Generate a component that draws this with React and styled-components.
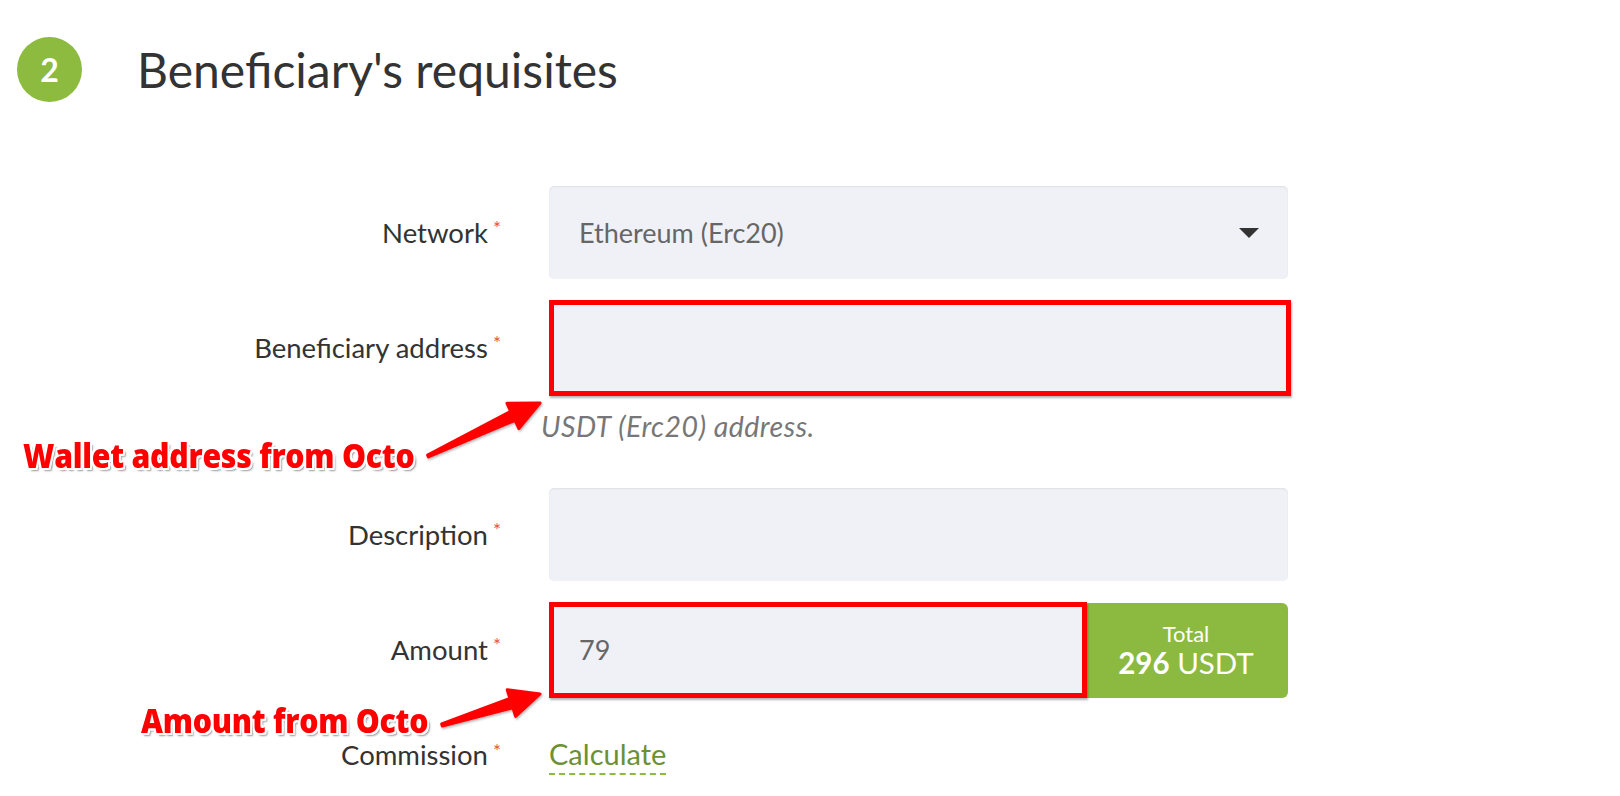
import React from "react";
import styled, { createGlobalStyle } from "styled-components";

const GlobalStyle = createGlobalStyle`
  html, body {
    margin: 0;
    padding: 0;
    background: #fff;
  }
  body {
    font-family: Lato, "Open Sans", sans-serif;
    color: #333;
  }
`;

const Page = styled.div`
  position: relative;
  width: 1620px;
  height: 796px;
  padding-top: 37px;
  box-sizing: border-box;
  overflow: hidden;
`;

const Header = styled.div`
  display: flex;
  align-items: center;
  gap: 55px;
  padding-left: 17px;
`;

const StepBadge = styled.div`
  width: 65px;
  height: 65px;
  border-radius: 50%;
  background: #8dbb3f;
  color: #fff;
  display: flex;
  align-items: center;
  justify-content: center;
  font-size: 32px;
  font-weight: 700;
`;

const Title = styled.h2`
  margin: 0;
  font-size: 48px;
  font-weight: 400;
  color: #333;
`;

const Form = styled.div`
  display: grid;
  grid-template-columns: 501px 739px;
  column-gap: 48px;
  row-gap: 22px;
  margin-top: 84px;
`;

const Label = styled.div`
  height: ${({ short }) => (short ? "28px" : "93px")};
  margin-top: ${({ short }) => (short ? "20px" : "0")};
  display: flex;
  align-items: center;
  justify-content: flex-end;
  font-size: 27.5px;
  color: #333;
`;

const Required = styled.span`
  color: #e8543f;
  font-size: 19px;
  align-self: flex-start;
  margin-top: ${({ short }) => (short ? "-1px" : "30px")};
  margin-left: 5px;
`;

const FieldCell = styled.div`
  display: flex;
  flex-direction: column;
  align-items: flex-start;
  margin-top: ${({ spaced }) => (spaced ? "19px" : "0")};
`;

const FieldLine = styled.div`
  display: flex;
  width: 739px;
`;

const Input = styled.div`
  position: relative;
  flex: 1;
  height: 93px;
  box-sizing: border-box;
  background: #f0f1f6;
  border-radius: ${({ joined }) => (joined ? "5px 0 0 5px" : "5px")};
  box-shadow: inset 0 1px 2px rgba(0, 0, 0, 0.07);
  display: flex;
  align-items: center;
  padding: 0 30px;
  font-size: 27px;
  color: #666;

  &::after {
    content: "";
    display: ${({ marked }) => (marked ? "block" : "none")};
    position: absolute;
    inset: -1px -3px -2px 0;
    border: 5px solid #ff0000;
    box-shadow: 1px 2px 2px rgba(0, 0, 0, 0.3);
  }
`;

const Caret = styled.span`
  position: absolute;
  right: 29px;
  top: 42px;
  width: 0;
  height: 0;
  border-left: 10px solid transparent;
  border-right: 10px solid transparent;
  border-top: 10px solid #333;
`;

const Total = styled.div`
  width: 204px;
  height: 95px;
  background: #8cba40;
  border-radius: 0 6px 6px 0;
  color: #fff;
  display: flex;
  flex-direction: column;
  align-items: center;
  justify-content: center;
  line-height: 1.15;
`;

const TotalCaption = styled.span`
  font-size: 22px;
`;

const TotalValue = styled.span`
  font-size: 29.5px;
  b {
    font-weight: 700;
  }
`;

const Hint = styled.div`
  margin: 20px 0 28px -8px;
  font-size: 28.5px;
  letter-spacing: 0.5px;
  line-height: 24px;
  font-style: italic;
  color: #777;
`;

const CalcLink = styled.span`
  font-size: 29px;
  line-height: 30px;
  color: #6b9133;
  padding-bottom: 4px;
  border-bottom: 2px dashed #8dbb3f;
`;

const Callout = styled.div`
  position: absolute;
  left: ${({ x }) => x}px;
  top: ${({ y }) => y}px;
  font-family: "Open Sans", sans-serif;
  font-weight: 800;
  font-size: 34px;
  line-height: 30px;
  letter-spacing: -0.3px;
  color: #ff0000;
  white-space: nowrap;
  transform: scaleX(0.89);
  transform-origin: left center;
  text-shadow: -2px 0 #fff, 2px 0 #fff, 0 -2px #fff, 0 2px #fff,
    -2px -2px #fff, 2px -2px #fff, -2px 2px #fff, 2px 2px #fff,
    3px 3px 2px rgba(0, 0, 0, 0.4);
`;

const Overlay = styled.svg`
  position: absolute;
  left: 0;
  top: 0;
  pointer-events: none;
`;

// Tapered arrow: thin tail, wide shaft near the head, triangular point.
const arrowPoints = ([tx, ty], [px, py], headLen = 30, headHalf = 14) => {
  const dx = px - tx;
  const dy = py - ty;
  const len = Math.hypot(dx, dy);
  const ux = dx / len;
  const uy = dy / len;
  const nx = -uy;
  const ny = ux;
  const bx = px - ux * headLen;
  const by = py - uy * headLen;
  const pts = [
    [tx + nx * 1, ty + ny * 1],
    [bx + nx * 5, by + ny * 5],
    [bx + nx * headHalf, by + ny * headHalf],
    [px, py],
    [bx - nx * headHalf, by - ny * headHalf],
    [bx - nx * 5, by - ny * 5],
    [tx - nx * 1, ty - ny * 1],
  ];
  return pts.map((p) => p.map((v) => v.toFixed(1)).join(",")).join(" ");
};

const Arrow = ({ from, to }) => (
  <polygon
    points={arrowPoints(from, to)}
    fill="#ff0000"
    stroke="#ff0000"
    strokeWidth="3"
    strokeLinejoin="round"
    filter="url(#arrowShade)"
  />
);

const Field = ({ label, children }) => (
  <>
    <Label>
      {label}
      <Required>*</Required>
    </Label>
    <FieldCell>{children}</FieldCell>
  </>
);

export default function App() {
  return (
    <>
      <GlobalStyle />
      <Page>
        <Header>
          <StepBadge>2</StepBadge>
          <Title>Beneficiary's requisites</Title>
        </Header>

        <Form>
          <Field label="Network">
            <FieldLine>
              <Input>
                Ethereum (Erc20)
                <Caret />
              </Input>
            </FieldLine>
          </Field>

          <Field label="Beneficiary address">
            <FieldLine>
              <Input marked />
            </FieldLine>
            <Hint>USDT (Erc20) address.</Hint>
          </Field>

          <Field label="Description">
            <FieldLine>
              <Input />
            </FieldLine>
          </Field>

          <Field label="Amount">
            <FieldLine>
              <Input marked joined>
                79
              </Input>
              <Total>
                <TotalCaption>Total</TotalCaption>
                <TotalValue>
                  <b>296</b> USDT
                </TotalValue>
              </Total>
            </FieldLine>
          </Field>

          <Label short>
            Commission
            <Required short>*</Required>
          </Label>
          <FieldCell spaced>
            <CalcLink>Calculate</CalcLink>
          </FieldCell>
        </Form>

        <Callout x={23} y={440}>
          Wallet address from Octo
        </Callout>
        <Callout x={141} y={705}>
          Amount from Octo
        </Callout>

        <Overlay width="1620" height="796">
          <defs>
            <filter id="arrowShade" x="-10%" y="-10%" width="130%" height="140%">
              <feDropShadow dx="1" dy="1.5" stdDeviation="1" floodColor="#000" floodOpacity="0.3" />
            </filter>
          </defs>
          <Arrow from={[428, 456]} to={[540, 403]} />
          <Arrow from={[442, 725]} to={[540, 694]} />
        </Overlay>
      </Page>
    </>
  );
}
